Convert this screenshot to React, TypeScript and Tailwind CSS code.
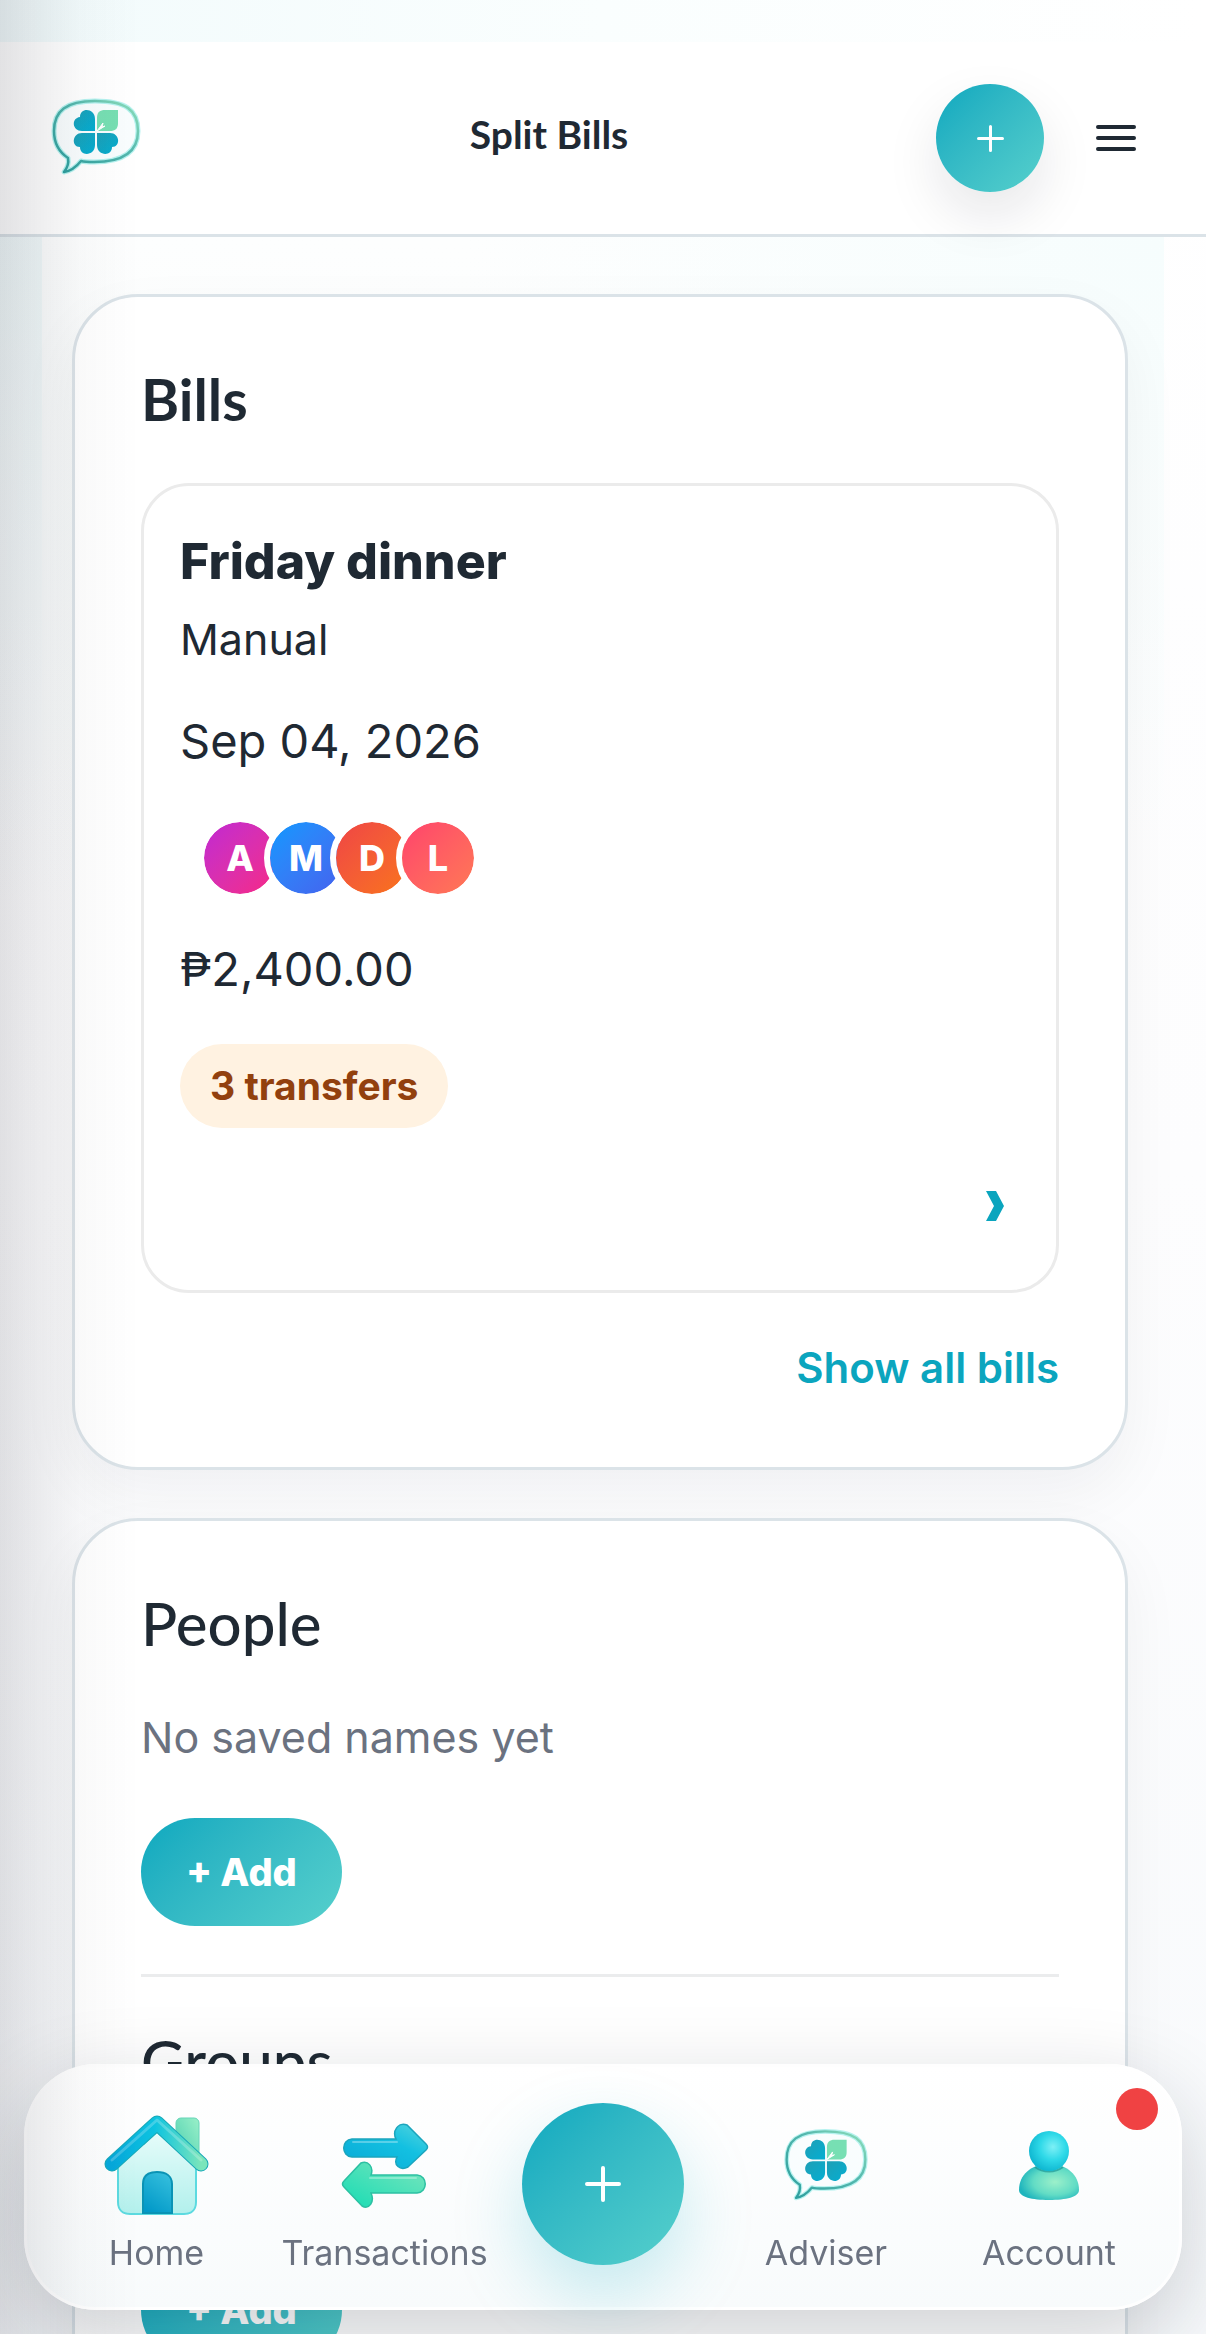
import { ReactNode } from "react";

// ===== DATA =====
const members = [
  { name: "A", color: "bg-linear-135 from-[#c026d3] to-[#f72585]" },
  { name: "M", color: "bg-linear-135 from-[#0099ff] to-[#4361ee]" },
  { name: "D", color: "bg-linear-135 from-[#ef4444] to-[#f97316]" },
  { name: "L", color: "bg-linear-135 from-[#ff416c] to-[#ff7854]" },
];

export default function App() {
  return (
    <div className="relative h-screen overflow-hidden bg-[radial-gradient(ellipse_600px_900px_at_0_0,#ecf8f9,transparent),linear-gradient(#ffffff,#fdfdfe_50%,#f8fafc)] font-['Inter',sans-serif] text-[#1f2933]">
      {/* TOP STRIP */}
      <div className="h-[42px] bg-linear-to-r from-[#f2fbfc] via-[#fafefe] to-white" />

      {/* HEADER */}
      <header className="flex h-[195px] items-center border-b-3 border-[#dbe3e8] bg-white px-12">
        <a href="#" aria-label="Adviser home" className="w-[114px]">
          <CloverLogo id="top" className="h-24 w-24" />
        </a>
        <h1 className="flex-1 pb-2 text-center font-['Lato',sans-serif] text-[39px] leading-[48px] font-bold">Split Bills</h1>
        <div className="flex items-center justify-end gap-[30px]">
          <button aria-label="New bill" className="flex h-[108px] w-[108px] items-center justify-center rounded-full bg-linear-135 from-[#06a8bf] to-[#55d0cc] text-white shadow-[0_24px_54px_rgba(15,23,42,0.1)]">
            <Plus className="h-[27px] w-[27px]" />
          </button>
          <button aria-label="Menu" className="flex h-16 w-[84px] items-center justify-center">
            <svg viewBox="0 0 40 30" className="h-[30px] w-10" fill="none" stroke="#1f2933" strokeWidth="4" strokeLinecap="round">
              <path d="M2 4h36M2 15h36M2 26h36" />
            </svg>
          </button>
        </div>
      </header>

      {/* CONTENT */}
      <main className="mx-[42px] space-y-12 bg-[radial-gradient(ellipse_700px_600px_at_100%_0,#f6fdfd,transparent),linear-gradient(#fdfefe,transparent_900px)] pt-[57px] pr-9 pl-[30px]">
        <section className="rounded-[66px] border-3 border-[#dbe3e8] bg-white px-[66px] pt-[66px] pb-[69px] shadow-[0_24px_60px_rgba(15,23,42,0.05)]">
          <h2 className="font-['Lato',sans-serif] text-[58px] leading-[72px] font-bold">Bills</h2>

          <article className="mt-12 rounded-[48px] border-3 border-[#ebebeb] px-9 pt-[45px] pb-[69px]">
            <h3 className="text-[50px] leading-[60px] font-extrabold">Friday dinner</h3>
            <p className="mt-[18px] text-[43px] leading-[60px]">Manual</p>
            <p className="mt-9 text-[47px] leading-[72px]">Sep 04, 2026</p>
            <div className="mt-[39px] flex pl-9">
              {members.map((m) => (
                <span key={m.name} className={`-ml-[18px] flex h-[84px] w-[84px] items-center justify-center rounded-full border-6 border-white bg-clip-padding text-[36px] font-extrabold text-white ${m.color}`}>
                  {m.name}
                </span>
              ))}
            </div>
            <p className="mt-[33px] text-[47px] leading-[72px]">₱2,400.00</p>
            <span className="mt-[39px] inline-block rounded-full bg-[#fff2e1] px-[30px] text-[39px] leading-[84px] font-bold text-[#92400e]">3 transfers</span>
            <div className="mt-[63px] flex justify-end pr-[15px]">
              <button aria-label="Open Friday dinner">
                <svg viewBox="0 0 20 30" className="h-[30px] w-5" fill="#0ba5be">
                  <path d="M1 0h10l8 15-8 15H1l8-15z" />
                </svg>
              </button>
            </div>
          </article>

          <div className="mt-[45px] flex justify-end">
            <a href="#" className="text-[42px] leading-[60px] font-semibold text-[#0ba5be]">
              Show all bills
            </a>
          </div>
        </section>

        <section className="rounded-[66px] border-3 border-[#dbe3e8] bg-white px-[66px] pt-[66px] pb-[69px] shadow-[0_24px_60px_rgba(15,23,42,0.05)]">
          <Group title="People" />
          <hr className="my-12 border-t-3 border-[#ebeced]" />
          <Group title="Groups" />
        </section>
      </main>

      {/* BOTTOM NAV */}
      <nav className="fixed inset-x-6 bottom-6 grid h-[246px] grid-cols-[223fr_233fr_204fr_242fr_204fr] items-end rounded-[72px] border-3 border-white/80 bg-linear-to-b from-white to-[#f8fbfc] pr-[28px] pb-[30px] pl-[18px] shadow-[0_30px_90px_rgba(15,23,42,0.2)]">
        <Tab label="Home" icon={<HomeIcon />} />
        <Tab label="Transactions" icon={<TransferIcon />} />
        <div className="flex justify-center pb-3">
          <button aria-label="Add" className="flex h-[162px] w-[162px] items-center justify-center rounded-full bg-linear-135 from-[#06a8bf] to-[#55d0cc] text-white shadow-[0_30px_72px_rgba(6,168,191,0.22)]">
            <Plus className="h-9 w-9" />
          </button>
        </div>
        <Tab label="Adviser" icon={<CloverLogo id="nav" className="h-[90px] w-[90px]" />} />
        <Tab label="Account" icon={<PersonIcon />} />
        <span className="absolute top-[21px] right-[21px] h-[42px] w-[42px] rounded-full bg-[#f04243]" />
      </nav>

      {/* EDGE SHADE */}
      <div className="pointer-events-none absolute inset-y-0 left-0 w-[140px] bg-[linear-gradient(to_right,rgba(15,15,30,0.12),rgba(15,15,30,0.065)_30%,rgba(15,15,30,0.025)_58%,transparent)]" />
    </div>
  );
}

function Group({ title }: { title: string }) {
  return (
    <div>
      <h2 className="font-['Lato',sans-serif] text-[60px] leading-[72px] font-medium">{title}</h2>
      <p className="mt-12 text-[43px] leading-[60px] text-[#6b7280]">No saved names yet</p>
      <button className="mt-[51px] h-[108px] rounded-full bg-linear-135 from-[#06a8bf] to-[#55d0cc] px-[45px] text-[38px] font-extrabold text-white">+ Add</button>
    </div>
  );
}

function Tab({ label, icon }: { label: string; icon: ReactNode }) {
  return (
    <a href="#" className="flex flex-col items-center text-[34px] leading-[48px] text-[#6b7280]">
      <span className="flex h-[114px] items-center">{icon}</span>
      <span className="mt-[6px]">{label}</span>
    </a>
  );
}

function Plus({ className }: { className: string }) {
  return (
    <svg viewBox="0 0 36 36" className={className} fill="none" stroke="currentColor" strokeWidth="4" strokeLinecap="round">
      <path d="M18 2v32M2 18h32" />
    </svg>
  );
}

function CloverLogo({ id, className }: { id: string; className: string }) {
  return (
    <svg viewBox="0 0 96 96" className={className} fill="none">
      <defs>
        <linearGradient id={`${id}-line`} x1="0" y1="1" x2="1" y2="0">
          <stop offset="0" stopColor="#2b9d9d" />
          <stop offset="0.6" stopColor="#55b8ae" />
          <stop offset="1" stopColor="#8fe0ba" />
        </linearGradient>
        <linearGradient id={`${id}-leaf`} x1="0" y1="0" x2="1" y2="1">
          <stop offset="0" stopColor="#1f9fb5" />
          <stop offset="1" stopColor="#04aed2" />
        </linearGradient>
      </defs>
      <path d="M47 11c31 0 43 9 43 30 0 22-16 31-44 31-5 0-9 0-13-1-4 5-10 10-17 11 4-5 5-9 4-14C11 62 6 52 6 41c0-20 12-30 41-30z" fill="#f9fdfe" stroke="#b5f2ef" strokeWidth="5" strokeLinejoin="round" />
      <path d="M47 11c31 0 43 9 43 30 0 22-16 31-44 31-5 0-9 0-13-1-4 5-10 10-17 11 4-5 5-9 4-14C11 62 6 52 6 41c0-20 12-30 41-30z" stroke={`url(#${id}-line)`} strokeWidth="2.5" strokeLinejoin="round" />
      <g fill={`url(#${id}-leaf)`}>
        <path d="M47 41H34c-10 0-11-13-2-14 0-10 15-9 15 2z" />
        <path d="M47 43H34c-10 0-11 14-2 14 0 10 15 9 15-2z" />
        <path d="M49 43h13c10 0 11 14 2 14 0 10-15 9-15-2z" />
      </g>
      <path d="M49 41V28c0-6 3-8 8-8h13v13c0 6-3 8-8 8z" fill="#77dfb3" />
      <path d="M49 41l6-8-1 4 3-1z" fill="#fff" stroke="#fff" />
    </svg>
  );
}

function HomeIcon() {
  return (
    <svg viewBox="0 0 108 108" className="h-[108px] w-[108px]" fill="none">
      <defs>
        <linearGradient id="wall" x1="0.5" y1="0" x2="0.5" y2="1">
          <stop offset="0" stopColor="#e6fcfa" />
          <stop offset="1" stopColor="#b2f0ec" />
        </linearGradient>
        <linearGradient id="roof" x1="0" y1="0" x2="1" y2="0">
          <stop offset="0" stopColor="#06a8db" />
          <stop offset="0.48" stopColor="#0cc3e0" />
          <stop offset="1" stopColor="#7be5bb" />
        </linearGradient>
        <linearGradient id="door" x1="0.8" y1="0" x2="0.3" y2="1">
          <stop offset="0" stopColor="#35bfdd" />
          <stop offset="1" stopColor="#0299c8" />
        </linearGradient>
        <linearGradient id="chimney" x1="1" y1="0" x2="0" y2="1">
          <stop offset="0" stopColor="#9af0c8" />
          <stop offset="1" stopColor="#4bcfb1" />
        </linearGradient>
      </defs>
      <rect x="73" y="6" width="23" height="40" rx="5" fill="url(#chimney)" stroke="#66d5b8" />
      <path d="M54 20l39 34v36c0 8-5 12-12 12H27c-7 0-12-4-12-12V54z" fill="url(#wall)" stroke="#5cdae0" strokeWidth="2" />
      <path d="M9 52L54 11l44 41" stroke="#19a9b8" strokeWidth="15" strokeLinecap="round" strokeLinejoin="round" />
      <path d="M9 52L54 11l44 41" stroke="url(#roof)" strokeWidth="13" strokeLinecap="round" strokeLinejoin="round" />
      <path d="M9 48L54 8l44 40" stroke="#fff" strokeOpacity="0.22" strokeWidth="3" strokeLinecap="round" strokeLinejoin="round" />
      <path d="M40 101V72c0-8 5-12 14-12s15 4 15 12v29z" fill="url(#door)" stroke="#0a93b5" strokeWidth="2" />
    </svg>
  );
}

function TransferIcon() {
  return (
    <svg viewBox="0 0 90 90" className="h-[90px] w-[90px]">
      <defs>
        <linearGradient id="go" x1="0" y1="1" x2="1" y2="0">
          <stop offset="0" stopColor="#08a9d6" />
          <stop offset="0.6" stopColor="#13c0e1" />
          <stop offset="1" stopColor="#57d5dd" />
        </linearGradient>
        <linearGradient id="back" x1="0" y1="1" x2="1" y2="0">
          <stop offset="0" stopColor="#17dcb4" />
          <stop offset="1" stopColor="#7be5bd" />
        </linearGradient>
      </defs>
      <path d="M12 18h44c-4-8 2-17 11-14l19 19c2 2 2 4 0 6L68 46c-8 4-15-2-11-10H12c-11-1-11-17 0-18z" fill="url(#go)" stroke="#1ba5bd" strokeWidth="1.5" />
      <path d="M13 21h44" stroke="#fff" strokeOpacity="0.3" strokeWidth="2" strokeLinecap="round" />
      <path d="M77 54H31c3-8-3-15-10-12L4 60c-2 2-2 4 0 6l18 19c7 4 13-4 9-13h46c11-1 11-17 0-18z" fill="url(#back)" stroke="#2cc0a2" strokeWidth="1.5" />
      <path d="M76 57H30" stroke="#fff" strokeOpacity="0.3" strokeWidth="2" strokeLinecap="round" />
    </svg>
  );
}

function PersonIcon() {
  return (
    <svg viewBox="0 0 72 78" className="h-[78px] w-[72px]">
      <defs>
        <radialGradient id="head" cx="0.6" cy="0.4" r="0.65">
          <stop offset="0" stopColor="#7df0f6" />
          <stop offset="0.5" stopColor="#2fd9e8" />
          <stop offset="1" stopColor="#0cb4cf" />
        </radialGradient>
        <radialGradient id="torso" cx="0.6" cy="0.5" r="0.6">
          <stop offset="0" stopColor="#9cf0ca" />
          <stop offset="0.6" stopColor="#62dcc5" />
          <stop offset="1" stopColor="#1fb5bd" />
        </radialGradient>
      </defs>
      <path d="M36 37c18 0 30 11 30 26 0 7-13 10-30 10S6 70 6 63c0-15 12-26 30-26z" fill="url(#torso)" />
      <path d="M22 40c8 6 20 6 28 0" stroke="#128c8f" strokeWidth="2" fill="none" opacity="0.6" />
      <circle cx="36" cy="24" r="20" fill="url(#head)" />
    </svg>
  );
}
